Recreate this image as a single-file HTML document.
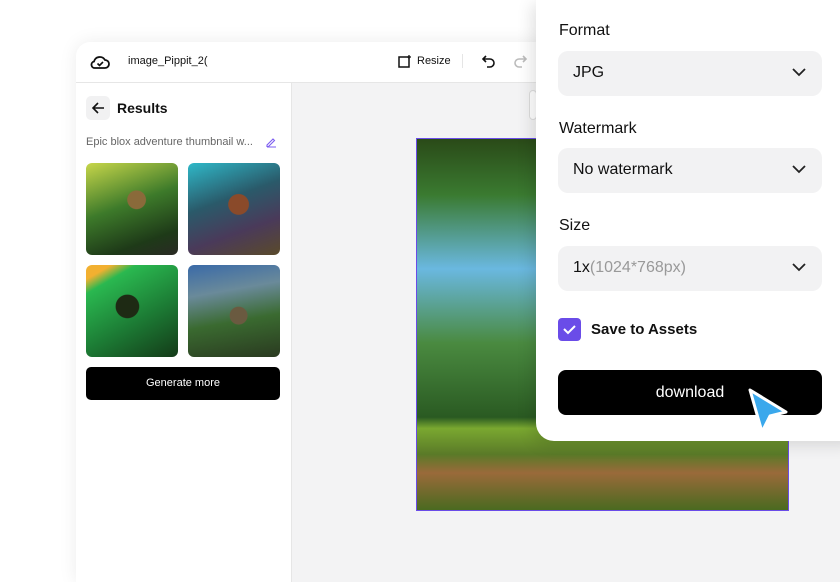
<!DOCTYPE html>
<html><head><style>
*{margin:0;padding:0;box-sizing:border-box}
body{width:840px;height:560px;background:#fff;font-family:"Liberation Sans",sans-serif;position:relative;overflow:hidden}
.win{position:absolute;left:76px;top:42px;width:800px;height:540px;background:#f3f3f4;border-radius:14px 0 0 0;box-shadow:0 0 18px rgba(0,0,0,.08);overflow:hidden}
.hdr{position:absolute;left:0;top:0;right:0;height:41px;background:#fff;border-bottom:1px solid #e6e6e6}
.side{position:absolute;left:0;top:41px;width:216px;bottom:0;background:#fff;border-right:1px solid #e6e6e6}
.t{position:absolute;white-space:nowrap}
.thumb{position:absolute;width:92px;height:92px;border-radius:6px;overflow:hidden}
.panel{position:absolute;left:536px;top:0;width:320px;height:441px;background:#fff;border-radius:0 0 0 18px;box-shadow:-4px 4px 16px rgba(0,0,0,.12)}
.lab{position:absolute;left:23px;font-size:16px;color:#111}
.sel{position:absolute;left:22px;width:264px;height:45px;background:#f2f2f3;border-radius:10px;font-size:16px;color:#111;padding:13px 15px}
.sel svg{position:absolute;right:16px;top:17px}
</style></head><body>
<div class="win">
 <div class="hdr">
  <svg class="t" style="left:14px;top:11px" width="20" height="18" viewBox="0 0 20 18"><path d="M5 15h10a4 4 0 0 0 0-8 6 6 0 0 0-11 1.5A3.3 3.3 0 0 0 5 15z" fill="none" stroke="#111" stroke-width="1.8"/><path d="M7.5 10.5l2 2 3.5-3.5" fill="none" stroke="#111" stroke-width="1.6"/></svg>
  <div class="t" style="left:52px;top:13px;font-size:11px;color:#111">image_Pippit_2(</div>
  <svg class="t" style="left:321px;top:12px" width="15" height="15" viewBox="0 0 15 15"><rect x="2" y="3" width="10" height="10" fill="none" stroke="#111" stroke-width="1.5"/><path d="M12 1v4M10 3h4" stroke="#111" stroke-width="1.3"/></svg>
  <div class="t" style="left:341px;top:13px;font-size:11px;color:#111">Resize</div>
  <div class="t" style="left:386px;top:12px;width:1px;height:14px;background:#e5e5e5"></div>
  <svg class="t" style="left:405px;top:11px" width="16" height="16" viewBox="0 0 16 16"><path d="M5 3L2 6l3 3M2 6h7a4 4 0 0 1 0 8H6" fill="none" stroke="#111" stroke-width="1.6"/></svg>
  <svg class="t" style="left:436px;top:11px" width="16" height="16" viewBox="0 0 16 16"><path d="M11 3l3 3-3 3M14 6H7a4 4 0 0 0 0 8h3" fill="none" stroke="#bbb" stroke-width="1.6"/></svg>
 </div>
 <div class="side">
  <div class="t" style="left:10px;top:13px;width:24px;height:24px;background:#f1f1f2;border-radius:5px"></div>
  <svg class="t" style="left:15px;top:18px" width="14" height="14" viewBox="0 0 14 14"><path d="M7 2L2 7l5 5M2 7h11" fill="none" stroke="#111" stroke-width="1.6"/></svg>
  <div class="t" style="left:41px;top:17px;font-size:14px;font-weight:bold;color:#111">Results</div>
  <div class="t" style="left:10px;top:53px;font-size:11px;color:#666">Epic blox adventure thumbnail w...</div>
  <svg class="t" style="left:189px;top:53px" width="12" height="12" viewBox="0 0 12 12"><path d="M2 9l6-6 1.5 1.5-6 6H2zM2 11h9" fill="none" stroke="#7b5cf0" stroke-width="1.1"/></svg>
  <div class="thumb" style="left:10px;top:80px;background:radial-gradient(circle at 55% 40%,#8a6a3a 0 12%,transparent 13%),linear-gradient(160deg,#c7d64a,#3d7a2a 45%,#1e3a18 80%,#2a2a24)"></div>
  <div class="thumb" style="left:112px;top:80px;background:radial-gradient(circle at 55% 45%,#8a4a2a 0 14%,transparent 15%),linear-gradient(160deg,#2fb8c8,#2a5a6a 40%,#4a3a5a 70%,#5a4a2a)"></div>
  <div class="thumb" style="left:10px;top:182px;background:radial-gradient(circle at 45% 45%,#1e2a14 0 16%,transparent 17%),linear-gradient(150deg,#f2b030 0 10%,#2ab850 20%,#1c7a34 60%,#143a18)"></div>
  <div class="thumb" style="left:112px;top:182px;background:radial-gradient(circle at 55% 55%,#6a5a40 0 12%,transparent 13%),linear-gradient(170deg,#3a6aa8,#6a8a9a 30%,#3a6a30 60%,#2a3a20)"></div>
  <div class="t" style="left:10px;top:284px;width:194px;height:33px;background:#000;border-radius:5px;color:#fff;font-size:11px;text-align:center;line-height:33px">Generate more</div>
 </div>
 <div class="t" style="left:453px;top:48px;width:8px;height:30px;background:#fff;border:1px solid #ddd;border-radius:5px"></div>
 <div class="t" style="left:340px;top:96px;width:373px;height:373px;border:1.5px solid #6a4ce8;background:
  linear-gradient(180deg,transparent 0 75%,#7aa830 78%,#5a7a28 85%,#9a6a3a 90%,#4a6a20),
  radial-gradient(ellipse at 90% 35%,#e8f0f8 0 10%,transparent 11%),
  linear-gradient(180deg,#2a4a18,#3a7a30 15%,#6ab8e0 35%,#4a8a40 55%,#2a5a22 75%)"></div>
</div>
<div class="panel">
 <div class="lab" style="top:22px">Format</div>
 <div class="sel" style="top:51px">JPG<svg width="14" height="9" viewBox="0 0 14 9"><path d="M1 1l6 6 6-6" fill="none" stroke="#222" stroke-width="1.8"/></svg></div>
 <div class="lab" style="top:120px">Watermark</div>
 <div class="sel" style="top:148px">No watermark<svg width="14" height="9" viewBox="0 0 14 9"><path d="M1 1l6 6 6-6" fill="none" stroke="#222" stroke-width="1.8"/></svg></div>
 <div class="lab" style="top:217px">Size</div>
 <div class="sel" style="top:246px">1x<span style="color:#999">(1024*768px)</span><svg width="14" height="9" viewBox="0 0 14 9"><path d="M1 1l6 6 6-6" fill="none" stroke="#222" stroke-width="1.8"/></svg></div>
 <div class="t" style="left:22px;top:318px;width:23px;height:23px;background:#6a4ce8;border-radius:4px"></div>
 <svg class="t" style="left:27px;top:324px" width="13" height="11" viewBox="0 0 13 11"><path d="M1 5l4 4 7-7" fill="none" stroke="#fff" stroke-width="2"/></svg>
 <div class="t" style="left:55px;top:321px;font-size:15px;font-weight:bold;color:#111">Save to Assets</div>
 <div class="t" style="left:22px;top:370px;width:264px;height:45px;background:#000;border-radius:8px;color:#fff;font-size:16px;text-align:center;line-height:45px">download</div>
 <svg class="t" style="left:210px;top:386px" width="44" height="52" viewBox="0 0 44 52"><path d="M4 4L40 26 24 30 16 46z" fill="#3aa8ec" stroke="#fff" stroke-width="3" stroke-linejoin="round"/></svg>
</div>
</body></html>
